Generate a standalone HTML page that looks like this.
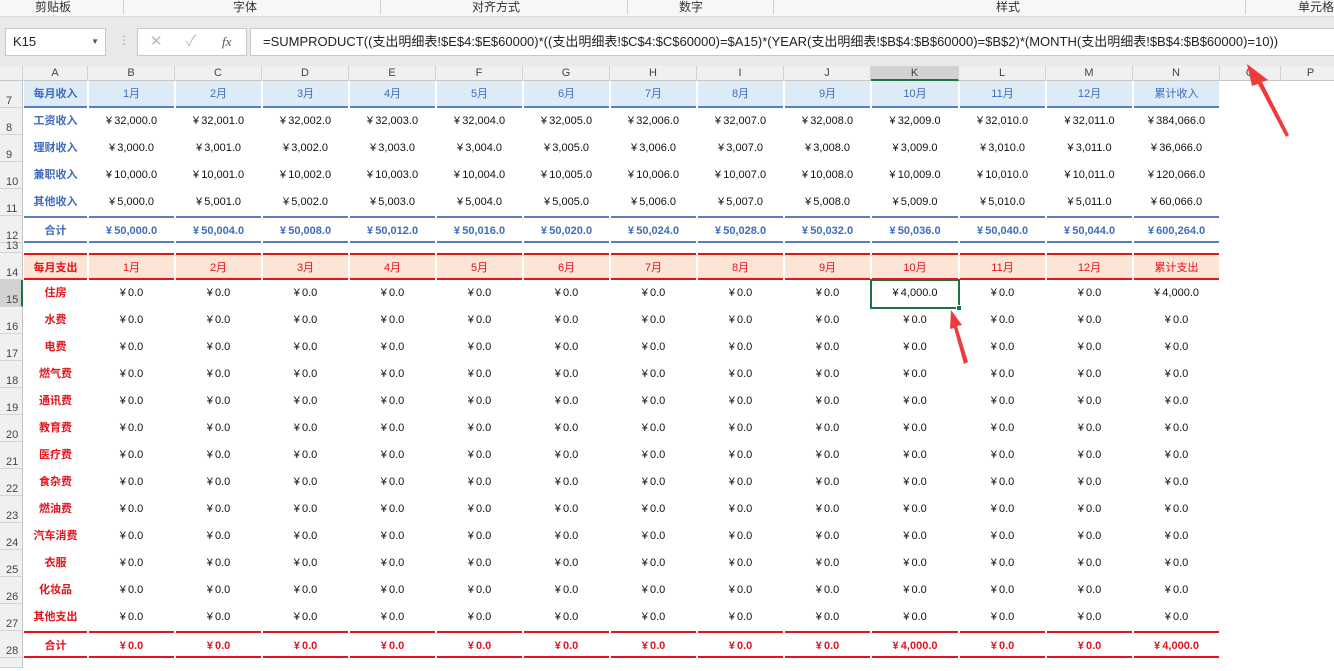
<!DOCTYPE html>
<html><head><meta charset="utf-8"><style>
*{margin:0;padding:0;box-sizing:border-box}
body{width:1334px;height:664px;overflow:hidden;background:#fff;font-family:"Liberation Sans","Noto Sans CJK SC",sans-serif;position:relative}
.rib{position:absolute;top:0;left:0;width:1334px;height:17px;background:#f7f7f7;border-bottom:1px solid #dadada;font-size:12px;color:#333}
.rib span{position:absolute;top:0;line-height:15px}
.rib i{position:absolute;top:0;width:1px;height:14px;background:#d0d0d0}
.fb{position:absolute;top:17px;left:0;width:1334px;height:49px;background:#e9e9e9}
.box{position:absolute;background:#fff;border:1px solid #c8c8c8}
.ch{position:absolute;top:66px;left:0;width:1334px;height:15px;background:#f0f0f0;border-bottom:1px solid #c6c6c6}
.ch div{position:absolute;top:0;height:15px;font-size:11px;color:#444;text-align:center;line-height:15px;border-right:1px solid #d4d4d4}
.rh{position:absolute;left:0;width:23px;background:#f0f0f0;border-right:1px solid #c6c6c6;border-bottom:1px solid #d4d4d4;font-size:11px;color:#444;padding-left:6px}
.c{position:absolute;font-size:11px;text-align:center;color:#111}
.b{font-weight:bold}
.bl{color:#3f6cbd}.rd{color:#e3141c}
</style></head><body>
<div class="rib">
<span style="left:35px">剪贴板</span><span style="left:233px">字体</span><span style="left:472px">对齐方式</span><span style="left:679px">数字</span><span style="left:996px">样式</span><span style="left:1298px">单元格</span>
<i style="left:123px"></i><i style="left:380px"></i><i style="left:627px"></i><i style="left:773px"></i><i style="left:1245px"></i>
</div>
<div class="fb">
<div class="box" style="left:5px;top:11px;width:101px;height:28px;font-size:13px;line-height:26px;padding-left:7px;color:#222">K15<span style="position:absolute;right:6px;top:0;font-size:8px;color:#555">▼</span></div>
<span style="position:absolute;left:118px;top:16px;color:#999;font-size:12px">⋮</span>
<div class="box" style="left:137px;top:11px;width:110px;height:28px;color:#bbb;font-size:15px;line-height:26px"><span style="position:absolute;left:12px">✕</span><span style="position:absolute;left:48px">✓</span><span style="position:absolute;left:84px;color:#555;font-style:italic;font-family:'Liberation Serif',serif;font-size:13px">fx</span></div>
<div class="box" style="left:250px;top:11px;width:1090px;height:28px;font-size:13px;line-height:26px;padding-left:12px;color:#222;white-space:nowrap">=SUMPRODUCT((支出明细表!$E$4:$E$60000)*((支出明细表!$C$4:$C$60000)=$A15)*(YEAR(支出明细表!$B$4:$B$60000)=$B$2)*(MONTH(支出明细表!$B$4:$B$60000)=10))</div>
</div>
<div class="ch">
<div style="left:0;width:23px"></div>
<div style="left:23px;width:65px">A</div><div style="left:88px;width:87px">B</div><div style="left:175px;width:87px">C</div><div style="left:262px;width:87px">D</div><div style="left:349px;width:87px">E</div><div style="left:436px;width:87px">F</div><div style="left:523px;width:87px">G</div><div style="left:610px;width:87px">H</div><div style="left:697px;width:87px">I</div><div style="left:784px;width:87px">J</div><div style="left:871px;width:88px;background:#d2d2d2;border-bottom:2px solid #217346">K</div><div style="left:959px;width:87px">L</div><div style="left:1046px;width:87px">M</div><div style="left:1133px;width:87px">N</div><div style="left:1220px;width:61px">O</div><div style="left:1281px;width:60px">P</div>
</div>
<div id="g"></div>
<script>
var X=[23,88,175,262,349,436,523,610,697,784,871,959,1046,1133,1220];
var h='';
function rh(n,t,hh,sel){h+='<div class="rh" style="top:'+t+'px;height:'+hh+'px;line-height:'+(hh*2-14)+'px;'+(sel?'background:#d2d2d2;border-right:2px solid #217346;':'')+'">'+n+'</div>';}
function cell(i,t,hh,txt,cls,st){h+='<div class="c '+cls+'" style="left:'+(X[i]+1)+'px;top:'+t+'px;width:'+(X[i+1]-X[i]-2)+'px;height:'+hh+'px;line-height:'+hh+'px;'+(st||'')+'">'+txt+'</div>';}
function f(n){return '¥&thinsp;'+n.toLocaleString('en-US',{minimumFractionDigits:1,maximumFractionDigits:1});}
var m=['1月','2月','3月','4月','5月','6月','7月','8月','9月','10月','11月','12月'];
rh(7,81,27);
cell(0,81,27,'每月收入','b bl','background:#ddebf7;border-bottom:2px solid #5b7fbd;');
for(var i=0;i<12;i++)cell(i+1,81,27,m[i],'bl','background:#ddebf7;border-bottom:2px solid #5b7fbd;');
cell(13,81,27,'累计收入','bl','background:#ddebf7;border-bottom:2px solid #5b7fbd;');
var inc=[['工资收入',32000,384066],['理财收入',3000,36066],['兼职收入',10000,120066],['其他收入',5000,60066]];
for(var r=0;r<4;r++){var t=108+27*r;rh(8+r,t,27);cell(0,t,27,inc[r][0],'b bl');for(i=0;i<12;i++)cell(i+1,t,27,f(inc[r][1]+i),'');cell(13,t,27,f(inc[r][2]),'');}
rh(12,216,27);var bs='border-top:2px solid #5b7fbd;border-bottom:2px solid #5b7fbd;';
cell(0,216,27,'合计','b bl',bs);for(i=0;i<12;i++)cell(i+1,216,27,f(50000+4*i),'b bl',bs);cell(13,216,27,f(600264),'b bl',bs);
rh(13,243,10);
rh(14,253,27);var es='background:#fce4d6;border-top:2px solid #e3141c;border-bottom:2px solid #e3141c;';
cell(0,253,27,'每月支出','b rd',es);for(i=0;i<12;i++)cell(i+1,253,27,m[i],'rd',es);cell(13,253,27,'累计支出','rd',es);
var ex=['住房','水费','电费','燃气费','通讯费','教育费','医疗费','食杂费','燃油费','汽车消费','衣服','化妆品','其他支出'];
for(r=0;r<13;r++){t=280+27*r;rh(15+r,t,27,r==0);cell(0,t,27,ex[r],'b rd');for(i=0;i<12;i++)cell(i+1,t,27,(r==0&&i==9)?f(4000):f(0),'');cell(13,t,27,r==0?f(4000):f(0),'');}
rh(28,631,27);var ts='border-top:2px solid #e3141c;border-bottom:2px solid #e3141c;';
cell(0,631,27,'合计','b rd',ts);for(i=0;i<12;i++)cell(i+1,631,27,i==9?f(4000):f(0),'b rd',ts);cell(13,631,27,f(4000),'b rd',ts);
rh('',658,10);
document.getElementById('g').innerHTML=h;
</script>
<div style="position:absolute;left:870px;top:279px;width:90px;height:30px;border:2px solid #217346"></div>
<div style="position:absolute;left:956px;top:305px;width:6px;height:6px;background:#217346;border:1px solid #fff"></div>
<svg style="position:absolute;left:0;top:0" width="1334" height="664">
<polygon points="1289,135 1262,82 1268,80 1247,64 1252,86 1258,84 1286,137" fill="#ee3b3b"/>
<polygon points="968,362 957,326 962,325 951,310 950,329 954,328 964,364" fill="#ee3b3b"/>
</svg>
</body></html>
